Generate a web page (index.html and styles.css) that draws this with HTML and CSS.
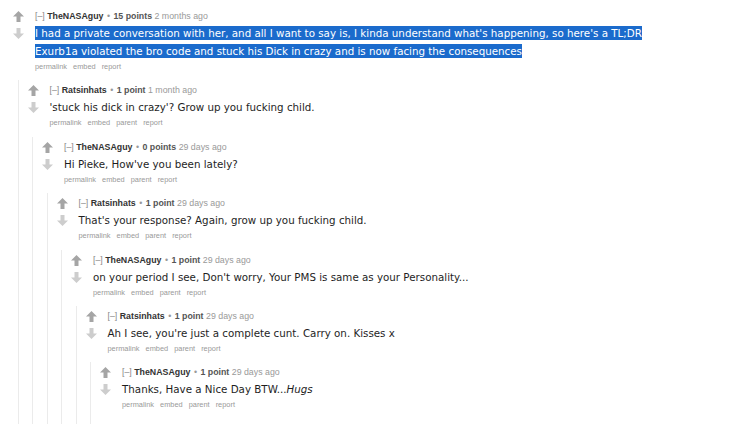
FILE: index.html
```html
<!DOCTYPE html>
<html>
<head>
<meta charset="utf-8">
<link rel="stylesheet" href="styles.css">
</head>
<body>
<div class="thread">
  <div class="comment">
    <div class="midcol">
      <svg class="arrow up" viewBox="0 0 11 11"><path d="M5.5 0 L11 5.5 H7.5 V11 H3.5 V5.5 H0 Z"/></svg>
      <svg class="arrow down" viewBox="0 0 11 11"><path d="M5.5 11 L11 5.5 H7.5 V0 H3.5 V5.5 H0 Z"/></svg>
    </div>
    <div class="entry">
      <p class="tagline"><span class="expand">[–]</span> <span class="author">TheNASAguy</span> <span class="bullet">•</span> <span class="score">15 points</span> <span class="time">2 months ago</span></p>
      <div class="md"><span class="sel">I had a private conversation with her, and all I want to say is, I kinda understand what's happening, so here's a TL;DR<br>Exurb1a violated the bro code and stuck his Dick in crazy and is now facing the consequences</span></div>
      <ul class="flat-list"><li>permalink</li><li>embed</li><li>report</li></ul>
    </div>
    <div class="child">
      <div class="comment">
        <div class="midcol">
          <svg class="arrow up" viewBox="0 0 11 11"><path d="M5.5 0 L11 5.5 H7.5 V11 H3.5 V5.5 H0 Z"/></svg>
          <svg class="arrow down" viewBox="0 0 11 11"><path d="M5.5 11 L11 5.5 H7.5 V0 H3.5 V5.5 H0 Z"/></svg>
        </div>
        <div class="entry">
          <p class="tagline"><span class="expand">[–]</span> <span class="author">Ratsinhats</span> <span class="bullet">•</span> <span class="score">1 point</span> <span class="time">1 month ago</span></p>
          <div class="md">'stuck his dick in crazy'? Grow up you fucking child.</div>
          <ul class="flat-list"><li>permalink</li><li>embed</li><li>parent</li><li>report</li></ul>
        </div>
        <div class="child">
          <div class="comment">
            <div class="midcol">
              <svg class="arrow up" viewBox="0 0 11 11"><path d="M5.5 0 L11 5.5 H7.5 V11 H3.5 V5.5 H0 Z"/></svg>
              <svg class="arrow down" viewBox="0 0 11 11"><path d="M5.5 11 L11 5.5 H7.5 V0 H3.5 V5.5 H0 Z"/></svg>
            </div>
            <div class="entry">
              <p class="tagline"><span class="expand">[–]</span> <span class="author">TheNASAguy</span> <span class="bullet">•</span> <span class="score">0 points</span> <span class="time">29 days ago</span></p>
              <div class="md">Hi Pieke, How've you been lately?</div>
              <ul class="flat-list"><li>permalink</li><li>embed</li><li>parent</li><li>report</li></ul>
            </div>
            <div class="child">
              <div class="comment">
                <div class="midcol">
                  <svg class="arrow up" viewBox="0 0 11 11"><path d="M5.5 0 L11 5.5 H7.5 V11 H3.5 V5.5 H0 Z"/></svg>
                  <svg class="arrow down" viewBox="0 0 11 11"><path d="M5.5 11 L11 5.5 H7.5 V0 H3.5 V5.5 H0 Z"/></svg>
                </div>
                <div class="entry">
                  <p class="tagline"><span class="expand">[–]</span> <span class="author">Ratsinhats</span> <span class="bullet">•</span> <span class="score">1 point</span> <span class="time">29 days ago</span></p>
                  <div class="md">That's your response? Again, grow up you fucking child.</div>
                  <ul class="flat-list"><li>permalink</li><li>embed</li><li>parent</li><li>report</li></ul>
                </div>
                <div class="child">
                  <div class="comment">
                    <div class="midcol">
                      <svg class="arrow up" viewBox="0 0 11 11"><path d="M5.5 0 L11 5.5 H7.5 V11 H3.5 V5.5 H0 Z"/></svg>
                      <svg class="arrow down" viewBox="0 0 11 11"><path d="M5.5 11 L11 5.5 H7.5 V0 H3.5 V5.5 H0 Z"/></svg>
                    </div>
                    <div class="entry">
                      <p class="tagline"><span class="expand">[–]</span> <span class="author">TheNASAguy</span> <span class="bullet">•</span> <span class="score">1 point</span> <span class="time">29 days ago</span></p>
                      <div class="md">on your period I see, Don't worry, Your PMS is same as your Personality...</div>
                      <ul class="flat-list"><li>permalink</li><li>embed</li><li>parent</li><li>report</li></ul>
                    </div>
                    <div class="child">
                      <div class="comment">
                        <div class="midcol">
                          <svg class="arrow up" viewBox="0 0 11 11"><path d="M5.5 0 L11 5.5 H7.5 V11 H3.5 V5.5 H0 Z"/></svg>
                          <svg class="arrow down" viewBox="0 0 11 11"><path d="M5.5 11 L11 5.5 H7.5 V0 H3.5 V5.5 H0 Z"/></svg>
                        </div>
                        <div class="entry">
                          <p class="tagline"><span class="expand">[–]</span> <span class="author">Ratsinhats</span> <span class="bullet">•</span> <span class="score">1 point</span> <span class="time">29 days ago</span></p>
                          <div class="md">Ah I see, you're just a complete cunt. Carry on. Kisses x</div>
                          <ul class="flat-list"><li>permalink</li><li>embed</li><li>parent</li><li>report</li></ul>
                        </div>
                        <div class="child">
                          <div class="comment last">
                            <div class="midcol">
                              <svg class="arrow up" viewBox="0 0 11 11"><path d="M5.5 0 L11 5.5 H7.5 V11 H3.5 V5.5 H0 Z"/></svg>
                              <svg class="arrow down" viewBox="0 0 11 11"><path d="M5.5 11 L11 5.5 H7.5 V0 H3.5 V5.5 H0 Z"/></svg>
                            </div>
                            <div class="entry">
                              <p class="tagline"><span class="expand">[–]</span> <span class="author">TheNASAguy</span> <span class="bullet">•</span> <span class="score">1 point</span> <span class="time">29 days ago</span></p>
                              <div class="md">Thanks, Have a Nice Day BTW...<em>Hugs</em></div>
                              <ul class="flat-list"><li>permalink</li><li>embed</li><li>parent</li><li>report</li></ul>
                            </div>
                          </div>
                        </div>
                      </div>
                    </div>
                  </div>
                </div>
              </div>
            </div>
          </div>
        </div>
      </div>
    </div>
  </div>
</div>
</body>
</html>
```
FILE: styles.css
```css
html, body {
  margin: 0;
  padding: 0;
  background: #fff;
}

.thread {
  padding: 10px 0 0 13px;
}

.comment {
  display: grid;
  grid-template-columns: 11px 1fr;
  column-gap: 11px;
}

.midcol {
  display: flex;
  flex-direction: column;
  gap: 6px;
  padding-top: 1px;
}

.arrow {
  width: 11px;
  height: 11px;
  display: block;
}

.arrow.up path { fill: #a5a5a5; }
.arrow.down path { fill: #cdcdcd; }

.entry {
  min-width: 0;
}

.tagline {
  margin: 0;
  font-family: "Liberation Sans", Arial, sans-serif;
  font-size: 8.8px;
  line-height: 12px;
  color: #888;
  white-space: nowrap;
}

.author {
  font-weight: bold;
  color: #333;
}

.bullet {
  color: #999;
  margin: 0 1px;
}

.score {
  font-weight: bold;
  color: #555;
}

.time {
  color: #999;
}

.md {
  margin-top: 2px;
  font-family: "DejaVu Sans", Verdana, sans-serif;
  font-size: 10.3px;
  line-height: 18px;
  color: #1e1e1e;
  white-space: nowrap;
}

.sel {
  background: #1b6bcc;
  color: #fff;
  padding: 1px 0;
}

.flat-list {
  list-style: none;
  margin: 2px 0 0;
  padding: 0;
  display: flex;
  gap: 6px;
  font-family: "Liberation Sans", Arial, sans-serif;
  font-size: 7.4px;
  line-height: 10px;
  color: #999;
}

.child {
  grid-column: 1 / -1;
  margin: 8.4px 0 0 4.5px;
  padding: 4px 0 0 9px;
  border-left: 1px solid #ebebeb;
}

.comment.last {
  padding-bottom: 14px;
}
```
